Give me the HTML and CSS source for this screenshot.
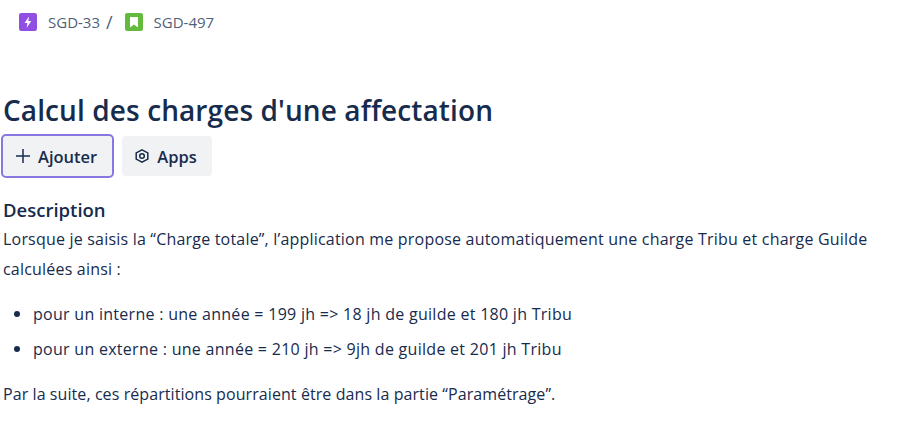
FILE: index.html
```html
<!DOCTYPE html>
<html lang="fr">
<head>
    <meta charset="UTF-8">
    <title>SGD-497</title>
    <link rel="stylesheet" href="styles.css">
</head>
<body>
    <nav class="crumbs">
        <span class="crumb">
            <svg class="issue-icon" viewBox="0 0 16 16"><rect width="16" height="16" rx="2" fill="#904ee2"/><path d="M8.800 3 5 8.800h2.400L6.900 13l4-6H8.400z" fill="#fff"/></svg>
            <span class="crumb-key">SGD-33</span>
        </span>
        <span class="crumb-sep">/</span>
        <span class="crumb">
            <svg class="issue-icon" viewBox="0 0 16 16"><rect width="16" height="16" rx="2" fill="#63ba3c"/><path d="M4.500 3.500h7v9.300L8 10.200l-3.500 2.600z" fill="#fff"/></svg>
            <span class="crumb-key">SGD-497</span>
        </span>
    </nav>

    <h1 class="title">Calcul des charges d'une affectation</h1>

    <div class="actions">
        <button class="btn btn-focus">
            <svg class="btn-icon" viewBox="0 0 14 14"><path d="M7 0v14M0 7h14" fill="none" stroke="#172b4d" stroke-width="1.500"/></svg>
            Ajouter
        </button>
        <button class="btn">
            <svg class="btn-icon" viewBox="1 1 14 14"><path d="M8 1.900 13.800 4.900v6.200L8 14.100 2.200 11.100V4.900z" fill="none" stroke="#172b4d" stroke-width="1.500"/><circle cx="8" cy="8" r="2.300" fill="none" stroke="#172b4d" stroke-width="1.500"/></svg>
            Apps
        </button>
    </div>

    <h2 class="section-title">Description</h2>
    <p class="text text-intro">Lorsque je saisis la “Charge totale”, l’application me propose automatiquement une charge Tribu et charge Guilde calculées ainsi :</p>
    <ul class="list">
        <li>pour un interne : une année = 199 jh =&gt; 18 jh de guilde et 180 jh Tribu</li>
        <li>pour un externe : une année = 210 jh =&gt; 9jh de guilde et 201 jh Tribu</li>
    </ul>
    <p class="text">Par la suite, ces répartitions pourraient être dans la partie “Paramétrage”.</p>
</body>
</html>
```

FILE: styles.css
```css
body {
    font-family: "Open Sans", "Noto Sans", sans-serif;
    color: #172b4d;
    background: #fff;
    margin: 0;
    padding: 0 3px;
    overflow: hidden;
}
.crumbs {
    display: flex;
    align-items: center;
    height: 44px;
    padding-left: 16px;
    font-size: 15px;
    color: #505f79;
}
.crumb {
    display: flex;
    align-items: center;
    gap: 11px;
}
.crumb-sep {
    margin: 0 12px 0 6px;
    font-size: 18px;
}
.issue-icon {
    width: 18px;
    height: 18px;
}
.title {
    margin: 50px 0 0;
    font-size: 28px;
    line-height: 32px;
    font-weight: 600;
    letter-spacing: 0.1px;
    color: #172b4d;
}
.actions {
    display: flex;
    align-items: center;
    gap: 8px;
    margin: 8px 0 0 -2px;
}
.btn {
    display: flex;
    align-items: center;
    gap: 8px;
    height: 40px;
    padding: 0 15px 0 13px;
    border: none;
    border-radius: 4px;
    background: #f1f2f4;
    color: #172b4d;
    font-family: inherit;
    font-size: 16.500px;
    font-weight: 600;
}
.btn-focus {
    height: 44px;
    border: 2px solid #8777e0;
    border-radius: 5px;
}
.btn-icon {
    width: 14px;
    height: 14px;
}
.section-title {
    margin: 20px 0 0;
    font-size: 18.500px;
    line-height: 24px;
    font-weight: 600;
}
.text {
    margin: 0;
    font-size: 16px;
    line-height: 30px;
    letter-spacing: 0.08px;
}
.text-intro {
    margin-top: 2px;
    letter-spacing: 0.2px;
}
.list {
    margin: 15px 0 15px;
    padding-left: 30px;
    font-size: 16px;
    line-height: 30px;
    letter-spacing: 0.28px;
    list-style: none;
}
.list li + li {
    margin-top: 5px;
}
.list li::before {
    content: "";
    display: inline-block;
    width: 6px;
    height: 6px;
    margin: 0 13px 3px -19px;
    border-radius: 50%;
    background: #172b4d;
    vertical-align: middle;
}
```
